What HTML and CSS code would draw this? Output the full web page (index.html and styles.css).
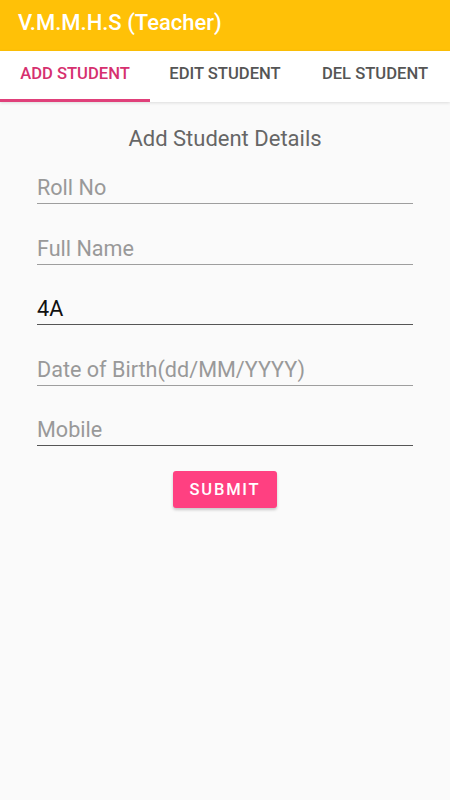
FILE: index.html
```html
<!DOCTYPE html>
<html>
<head>
<meta charset="utf-8">
<link rel="stylesheet" href="styles.css">
</head>
<body>
<header class="appbar">V.M.M.H.S (Teacher)</header>
<nav class="tabs">
  <div class="tab active">ADD STUDENT</div>
  <div class="tab">EDIT STUDENT</div>
  <div class="tab">DEL STUDENT</div>
</nav>
<main class="content">
  <h1 class="title">Add Student Details</h1>
  <div class="field"><span class="hint">Roll No</span></div>
  <div class="field"><span class="hint">Full Name</span></div>
  <div class="field dark"><span class="value">4A</span></div>
  <div class="field"><span class="hint">Date of Birth(dd/MM/YYYY)</span></div>
  <div class="field dark"><span class="hint">Mobile</span></div>
  <div class="actions"><button class="submit">SUBMIT</button></div>
</main>
</body>
</html>
```
FILE: styles.css
```css
* { box-sizing: border-box; }
html, body { margin: 0; padding: 0; }
body {
  width: 450px;
  height: 800px;
  background: #fafafa;
  font-family: Roboto, "Noto Sans", sans-serif;
  overflow: hidden;
}
.appbar {
  height: 51px;
  background: #ffc107;
  color: #fff;
  font-size: 22px;
  font-weight: 500;
  padding-left: 18px;
  display: flex;
  align-items: center;
  padding-bottom: 6px;
}
.tabs {
  height: 51px;
  background: #fff;
  display: flex;
  box-shadow: 0 1px 3px rgba(0,0,0,0.12);
  position: relative;
}
.tab {
  flex: 1;
  display: flex;
  align-items: center;
  justify-content: center;
  font-size: 16.6px;
  font-weight: 500;
  color: #555;
  padding-bottom: 3px;
  border-bottom: 3px solid transparent;
}
.tab.active {
  color: #d6306f;
  border-bottom-color: #e0407a;
}
.content {
  display: flex;
  flex-direction: column;
  padding: 0 37px;
}
.title {
  margin: 23px 0 0;
  height: 28px;
  text-align: center;
  font-size: 22px;
  font-weight: 400;
  color: #666;
  line-height: 28px;
}
.field {
  height: 60.5px;
  border-bottom: 1px solid #9e9e9e;
  display: flex;
  align-items: flex-end;
  padding-bottom: 3px;
  font-size: 21.6px;
}
.field:first-of-type { height: 51px; }
.field.dark { border-bottom-color: #555; }
.hint { color: #999; }
.value { color: #111; }
.actions {
  display: flex;
  justify-content: center;
  margin-top: 25px;
}
.submit {
  width: 104px;
  height: 37px;
  background: #ff4081;
  color: #fff;
  border: none;
  border-radius: 3px;
  font-family: Roboto, sans-serif;
  font-size: 16.5px;
  font-weight: 500;
  letter-spacing: 1.8px;
  box-shadow: 0 2px 3px rgba(0,0,0,0.2);
}
```
